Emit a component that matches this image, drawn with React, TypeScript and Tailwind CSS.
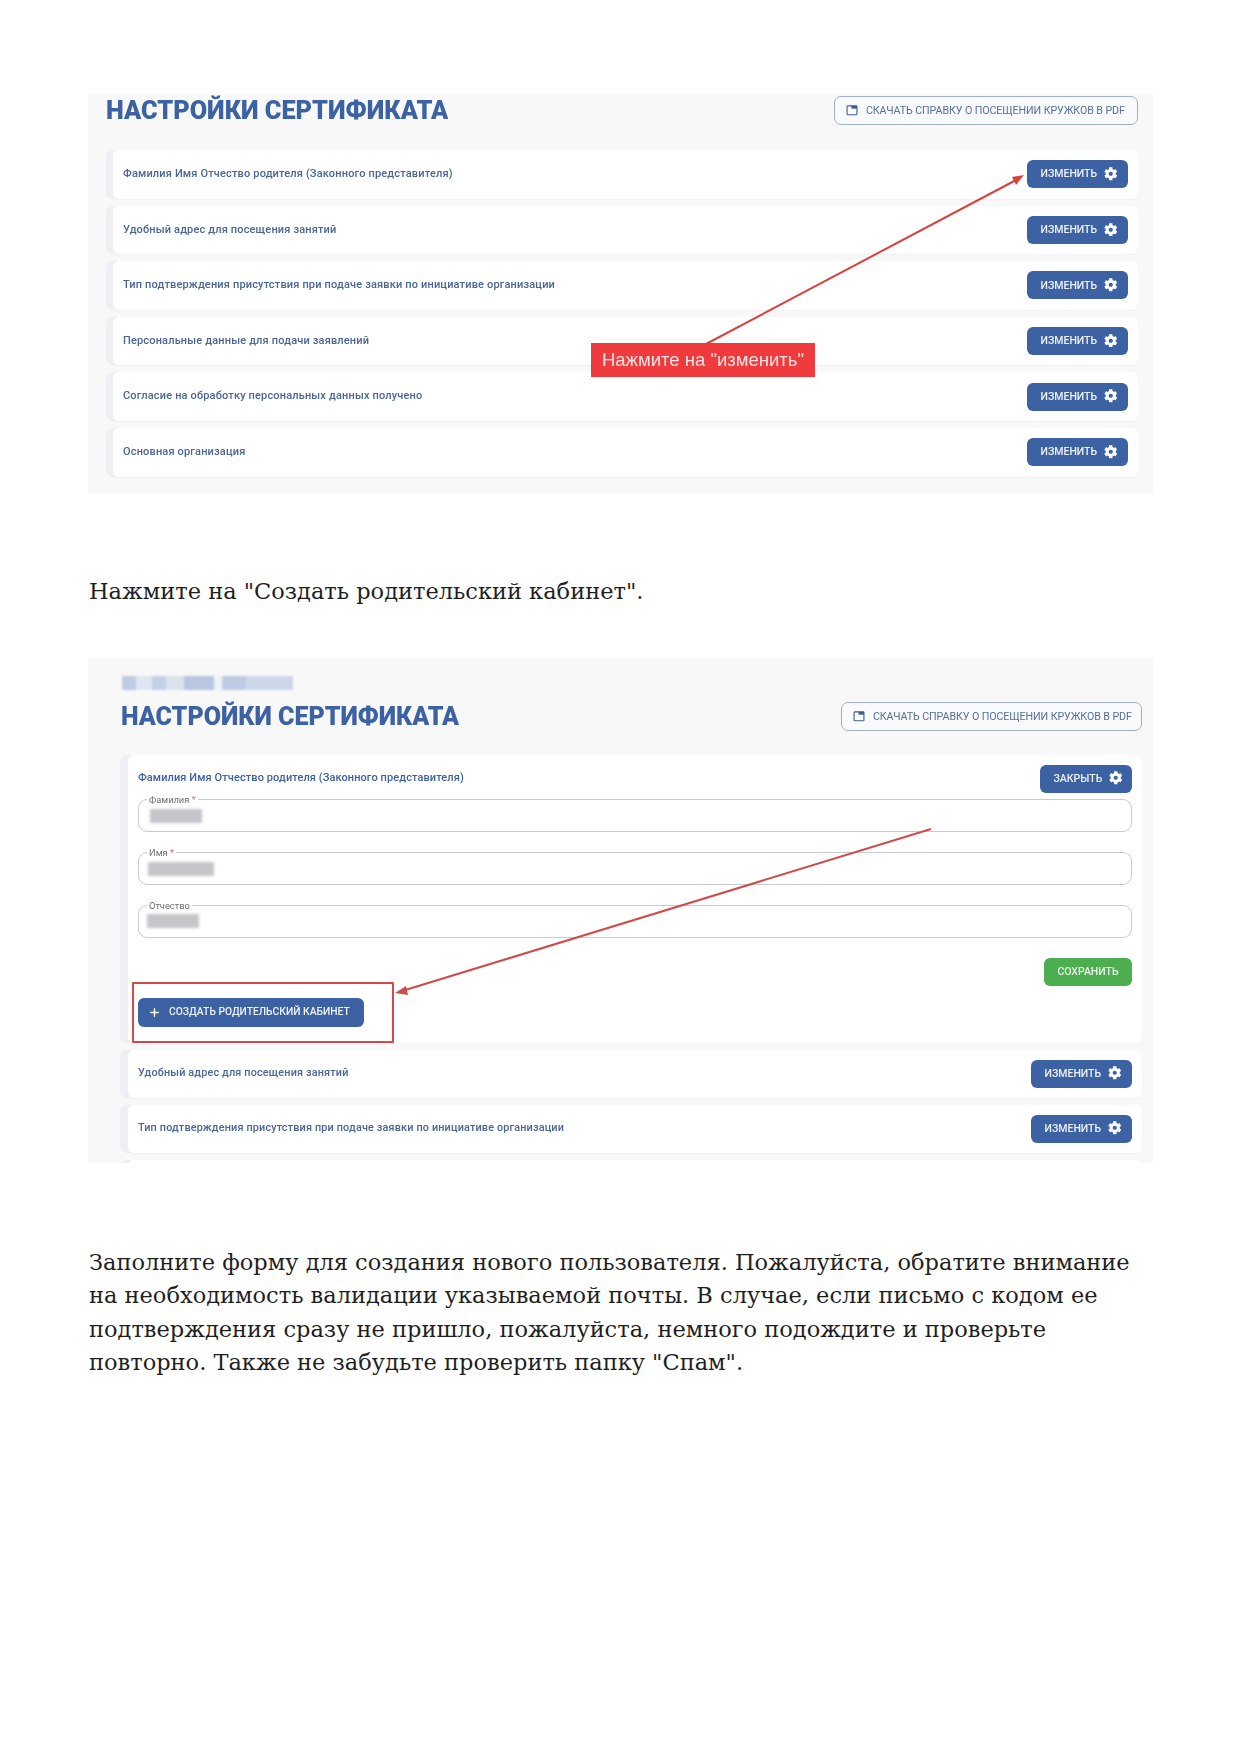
import { FaCog } from "react-icons/fa";
import { Plus } from "lucide-react";

function DocIcon() {
  return (
    <svg viewBox="0 0 12 12" className="h-[11px] w-[12px] shrink-0">
      <rect x="0.6" y="1" width="10.8" height="9.6" rx="0.8" fill="none" stroke="#3d5c97" strokeWidth="1.2" />
      <rect x="5.5" y="1" width="5.9" height="3" fill="#3d5c97" />
    </svg>
  );
}

function DownloadButton({ w }: { w: string }) {
  return (
    <button className={`flex h-[29px] items-center gap-[8px] rounded-[7px] border border-[#a3afca] bg-[#f9fafb] pl-[11px] text-[10.7px] uppercase tracking-[-0.1px] text-[#566f9f] ${w}`}>
      <DocIcon />
      <span className="pt-[2px]">Скачать справку о посещении кружков в PDF</span>
    </button>
  );
}

function ActionButton({ label, w }: { label: string; w: string }) {
  return (
    <button className={`flex h-[28px] items-center gap-[7px] rounded-[6px] bg-[#3d62a3] pl-[13.5px] text-[10.5px] font-medium uppercase text-[#eef2f9] ${w}`}>
      <span>{label}</span>
      <FaCog className="mt-[-1px] h-[13.5px] w-[13.5px] text-white" />
    </button>
  );
}

function Row({ text, h, rail, px, btnW, size }: { text: string; h: string; rail: string; px: string; btnW: string; size: string }) {
  return (
    <div className={`flex rounded-[7px] bg-[#edeff2] ${rail} ${h}`}>
      <div className={`flex flex-1 items-center justify-between rounded-[6px] bg-white shadow-[0_1px_1px_#eef0f3] ${px}`}>
        <span className={`font-medium tracking-[0.16px] text-[#4a6697] ${size}`}>{text}</span>
        <ActionButton label="Изменить" w={btnW} />
      </div>
    </div>
  );
}

function Field({ label, star, blur }: { label: string; star?: boolean; blur: string }) {
  return (
    <div className="relative h-[33px] rounded-[9px] border border-[#c9cbce] bg-white">
      <span className="absolute left-[8px] top-[-6px] bg-white px-[2px] text-[9.3px] leading-[12px] text-[#6d6f73]">
        {label}
        {star && <span className="text-[#dd6b6b]"> *</span>}
      </span>
      <div className={`absolute h-[14px] bg-[#c4c5c8] blur-[1.5px] ${blur}`} />
    </div>
  );
}

function Para({ children, cls }: { children: React.ReactNode; cls: string }) {
  return (
    <p className={`ml-[89px] w-[1080px] font-['DejaVu_Serif',serif] text-[22.5px] leading-[33.5px] text-[#1f1f1f] ${cls}`}>{children}</p>
  );
}

const rowsA = [
  "Фамилия Имя Отчество родителя (Законного представителя)",
  "Удобный адрес для посещения занятий",
  "Тип подтверждения присутствия при подаче заявки по инициативе организации",
  "Персональные данные для подачи заявлений",
  "Согласие на обработку персональных данных получено",
  "Основная организация",
];

export default function App() {
  return (
    <div className="h-[1754px] w-[1241px] overflow-hidden bg-white pt-[94px] font-['Roboto',sans-serif]">
      {/* first screenshot */}
      <section className="relative ml-[88px] h-[399px] w-[1065px] bg-[#f8f8f9] pl-[18px] pr-[15px] blur-[0.3px]">
        <div className="flex items-start justify-between pt-[2px]">
          <h2 className="text-[25.3px] font-black leading-[30px] text-[#3d62a3]">НАСТРОЙКИ СЕРТИФИКАТА</h2>
          <DownloadButton w="w-[304px]" />
        </div>
        <div className="mt-[24px] flex flex-col gap-[7px]">
          {rowsA.map((t) => (
            <Row key={t} text={t} h="h-[48.6px]" rail="pl-[7px]" px="pl-[10px] pr-[10px]" btnW="w-[101px]" size="text-[11px]" />
          ))}
        </div>
        <div className="absolute left-[503px] top-[249px] flex h-[34px] w-[224px] items-center justify-center bg-[#ef3b3e] font-['Liberation_Sans',sans-serif] text-[18.5px] text-[#fbe3e3]">
          Нажмите на "изменить"
        </div>
        <svg className="absolute left-0 top-0 h-full w-full" viewBox="0 0 1065 399">
          <line x1="618" y1="250" x2="930" y2="85" stroke="#d9413f" strokeWidth="2" />
          <polygon points="936,81 924,83 928,91" fill="#d9413f" />
        </svg>
      </section>

      <Para cls="mt-[82px]">Нажмите на "Создать родительский кабинет".</Para>

      {/* second screenshot */}
      <section className="relative ml-[88px] mt-[48px] h-[506px] w-[1065px] overflow-hidden bg-[#f8f8f9] pl-[32px] pr-[11px] blur-[0.3px]">
        <div className="ml-[2px] mt-[19px] flex h-[14px] w-[171px] bg-[#cdd7ea] blur-[1px]">
          <div className="h-full w-[14px] bg-[#bfcbe3]" />
          <div className="h-full w-[16px] bg-[#dfe6f2]" />
          <div className="h-full w-[14px] bg-[#c3cfe5]" />
          <div className="h-full w-[18px] bg-[#dbe3f0]" />
          <div className="h-full w-[30px] bg-[#b9c6e0]" />
          <div className="h-full w-[8px] bg-[#eef1f6]" />
          <div className="h-full w-[24px] bg-[#bfcbe3]" />
        </div>
        <div className="mt-[12px] flex items-start justify-between">
          <h2 className="ml-[1px] text-[25px] font-black leading-[30px] text-[#3d62a3]">НАСТРОЙКИ СЕРТИФИКАТА</h2>
          <DownloadButton w="w-[301px]" />
        </div>
        <div className="mt-[23px] flex flex-col gap-[7px]">
          <div className="flex h-[288px] rounded-[7px] bg-[#edeff2] pl-[8px]">
            <div className="flex-1 rounded-[6px] bg-white pl-[10px] pr-[10px] pt-[10px]">
              <div className="flex items-center justify-between">
                <span className="text-[11px] font-medium tracking-[0.09px] text-[#3d62a3]">Фамилия Имя Отчество родителя (Законного представителя)</span>
                <ActionButton label="Закрыть" w="w-[92px]" />
              </div>
              <div className="mt-[6px] flex flex-col gap-[20px]">
                <Field label="Фамилия" star blur="left-[11px] top-[9px] w-[52px]" />
                <Field label="Имя" star blur="left-[9px] top-[9px] w-[66px]" />
                <Field label="Отчество" blur="left-[8px] top-[8px] w-[52px]" />
              </div>
              <div className="mt-[20px] flex justify-end">
                <button className="h-[28px] w-[88px] rounded-[6px] bg-[#4cae50] text-[10.5px] font-medium uppercase text-[#eaf6ea]">Сохранить</button>
              </div>
              <button className="mt-[12px] flex h-[29px] w-[226px] items-center gap-[8px] rounded-[6px] bg-[#3d62a3] pl-[10px] text-[10.3px] font-medium uppercase text-[#eef2f9]">
                <Plus className="h-[13px] w-[13px] text-white" strokeWidth={2.5} />
                <span>Создать родительский кабинет</span>
              </button>
            </div>
          </div>
          <Row text="Удобный адрес для посещения занятий" h="h-[48px]" rail="pl-[8px]" px="pl-[10px] pr-[10px]" btnW="w-[101px]" size="text-[10.85px]" />
          <Row text="Тип подтверждения присутствия при подаче заявки по инициативе организации" h="h-[48px]" rail="pl-[8px]" px="pl-[10px] pr-[10px]" btnW="w-[101px]" size="text-[10.85px]" />
          <Row text="" h="h-[48px]" rail="pl-[8px]" px="pl-[10px] pr-[10px]" btnW="hidden" size="text-[10.85px]" />
        </div>
        <div className="absolute left-[44px] top-[325px] h-[61px] w-[262px] rounded-[1px] border-2 border-[#d24a4a]" />
        <svg className="absolute left-0 top-0 h-full w-full" viewBox="0 0 1065 506">
          <line x1="843" y1="172" x2="314" y2="334" stroke="#cf4a4a" strokeWidth="2" />
          <polygon points="307,336 318,329 320,338" fill="#cf4a4a" />
        </svg>
      </section>

      <Para cls="mt-[83px]">
        Заполните форму для создания нового пользователя. Пожалуйста, обратите внимание
        <br />
        на необходимость валидации указываемой почты. В случае, если письмо с кодом ее
        <br />
        подтверждения сразу не пришло, пожалуйста, немного подождите и проверьте
        <br />
        повторно. Также не забудьте проверить папку "Спам".
      </Para>
    </div>
  );
}
